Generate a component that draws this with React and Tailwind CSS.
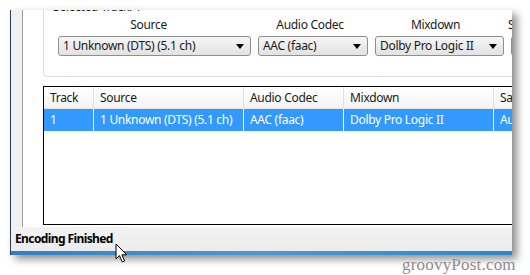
import React from 'react';

const ui = { fontFamily: '"Noto Sans", "Open Sans", sans-serif' };

const Select = ({ value, className }) => (
  <div
    className={`flex h-[20px] items-center justify-between rounded-[3px] border border-[#8e8f8f] bg-gradient-to-b from-[#f6f6f6] to-[#e2e2e2] pl-[4px] pr-[6px] text-[12px] text-[#1a1a1a] ${className}`}
  >
    <span className="whitespace-nowrap leading-none">{value}</span>
    <span className="h-0 w-0 shrink-0 border-x-[4px] border-t-[5px] border-x-transparent border-t-black" />
  </div>
);

const columns = [
  { name: 'Track', w: 'w-[50px]' },
  { name: 'Source', w: 'w-[150px]' },
  { name: 'Audio Codec', w: 'w-[100px]' },
  { name: 'Mixdown', w: 'w-[150px]' },
  { name: 'Sa', w: 'w-[40px]' },
];
const row = ['1', '1 Unknown (DTS) (5.1 ch)', 'AAC (faac)', 'Dolby Pro Logic II', 'Auto'];

const Cursor = () => (
  <svg className="absolute left-[115px] top-[243px]" width="14" height="21" viewBox="0 0 14 21">
    <path
      d="M1 1 L1 16 L4.5 12.6 L7.3 19 L9.6 18 L6.9 11.8 L11.8 11.8 Z"
      fill="white"
      stroke="black"
      strokeWidth="1"
      strokeLinejoin="round"
    />
  </svg>
);

export default function App() {
  return (
    <div className="relative h-[275px] w-[530px] overflow-hidden bg-white tracking-[-0.3px]" style={ui}>
      {/* window */}
      <div className="ml-[10px] mt-[10px] flex h-[245px] w-[502px] flex-col overflow-hidden border-l border-[#2c3e55] bg-[#f0f0f0] shadow-[5px_4px_8px_rgba(0,0,0,0.45)]">
        <div className="flex flex-1 overflow-hidden">
          <div className="w-[11px] shrink-0 bg-[#f0f0f0]" />
          {/* tab panel */}
          <div className="flex-1 overflow-hidden border-l border-[#9a9a9a] bg-white pl-[20px]">
            {/* group box */}
            <div className="-mt-[14px] h-[81px] w-[520px] rounded-[4px] border border-[#d5dfe5] pl-[9px]">
              <div className="mt-[3px] h-[14px] text-[12px] leading-[14px] text-[#1a1a1a]">Selected Track: 1</div>
              <div className="ml-[5px] mt-[4px] flex gap-[7px] text-[12px] leading-[14px] text-[#1a1a1a]">
                <div className="flex w-[193px] shrink-0 flex-col">
                  <div className="pr-[12px] text-center">Source</div>
                  <Select className="mt-[4px]" value="1 Unknown (DTS) (5.1 ch)" />
                </div>
                <div className="flex w-[110px] shrink-0 flex-col">
                  <div className="pr-[6px] text-center">Audio Codec</div>
                  <Select className="mt-[4px]" value="AAC (faac)" />
                </div>
                <div className="flex w-[129px] shrink-0 flex-col">
                  <div className="pr-[8px] text-center">Mixdown</div>
                  <Select className="mt-[4px]" value="Dolby Pro Logic II" />
                </div>
                <div className="flex w-[60px] shrink-0 flex-col">
                  <div className="-ml-[3px]">Samplerate</div>
                  <Select className="mt-[4px]" value="Auto" />
                </div>
              </div>
            </div>
            {/* track list */}
            <div className="mt-[9px] h-[139px] w-[520px] border border-black text-[12px] text-[#1a1a1a]">
              <div className="flex h-[22px] border-b border-[#e3e3e3] bg-gradient-to-b from-white to-[#f4f4f4]">
                {columns.map((c) => (
                  <div key={c.name} className={`${c.w} flex shrink-0 items-center border-r border-[#e0e0e0] pl-[6px]`}>
                    {c.name}
                  </div>
                ))}
              </div>
              <div className="flex h-[22px] bg-[#3399ff] text-white">
                {row.map((v, i) => (
                  <div key={i} className={`${columns[i].w} flex shrink-0 items-center border-r border-white pl-[6px]`}>
                    {v}
                  </div>
                ))}
              </div>
            </div>
          </div>
        </div>
        {/* status bar */}
        <div className="flex h-[24px] shrink-0 items-center bg-gradient-to-b from-[#f2f2f2] to-[#ececec] pl-[4px] text-[12px] font-bold tracking-[-0.6px] text-black">
          Encoding Finished
        </div>
        <div className="h-[4px] shrink-0 bg-gradient-to-r from-[#2f7fc4] via-[#4a9ad6] to-[#2f85c8]" />
      </div>

      <Cursor />

      <div
        className="absolute left-[402px] top-[252px] text-[17px] tracking-[0.2px] text-[#8c8c8c]"
        style={{ fontFamily: '"Liberation Serif", serif', textShadow: '0 0 1px #fff' }}
      >
        groovyPost.com
      </div>
    </div>
  );
}
